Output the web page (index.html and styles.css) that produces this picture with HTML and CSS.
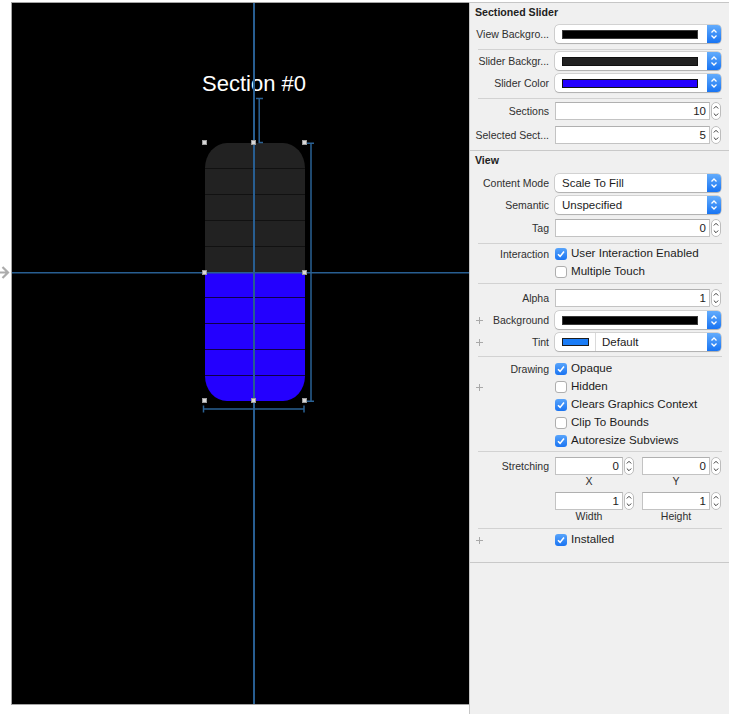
FILE: index.html
```html
<!DOCTYPE html>
<html>
<head>
<meta charset="utf-8">
<link rel="stylesheet" href="styles.css">
</head>
<body>
<div class="app">
  <div class="stage">
    <div class="screen"></div>
    <div class="caption">Section #0</div>
    <div class="slider">
      <div class="sec dark"></div><div class="sec dark"></div><div class="sec dark"></div><div class="sec dark"></div><div class="sec dark"></div>
      <div class="sec blue"></div><div class="sec blue"></div><div class="sec blue"></div><div class="sec blue"></div><div class="sec blue"></div>
    </div>
    <svg class="overlay" width="469" height="714" viewBox="0 0 469 714">
      <g fill="#285e91">
        <rect x="253" y="3" width="2" height="701"/>
        <rect x="12" y="272" width="457" height="1.5"/>
      </g>
      <g stroke="#2a6194" stroke-width="1.5" fill="none">
        <path d="M256 98.5 H263 M259.2 98 V142.5 H263"/>
        <path d="M305 143.2 H314 M311 143 V401 M305 401.2 H314"/>
        <path d="M203.5 409 H304 M203.5 405.5 V412.5 M304 405.5 V412.5"/>
      </g>
      <g fill="#d8d8d8" stroke="#9c9c9c" stroke-width="1">
        <rect x="202.5" y="140.5" width="4" height="4"/>
        <rect x="251.5" y="140.5" width="4" height="4"/>
        <rect x="302.5" y="140.5" width="4" height="4"/>
        <rect x="202.5" y="270.5" width="4" height="4"/>
        <rect x="302.5" y="270.5" width="4" height="4"/>
        <rect x="202.5" y="398.5" width="4" height="4"/>
        <rect x="251.5" y="398.5" width="4" height="4"/>
        <rect x="302.5" y="398.5" width="4" height="4"/>
      </g>
      <path d="M0 272.5 H7.5 M2.5 267 L8 272.5 L2.5 278" stroke="#acacac" stroke-width="2.2" fill="none"/>
    </svg>
  </div>

  <aside class="inspector">
    <div class="hdr">Sectioned Slider</div>

    <div class="row r-first">
      <div class="lbl"><span class="txt">View Backgro...</span></div>
      <div class="popup"><span class="swatch sw-black"></span><span class="pbtn"><svg width="14" height="18" viewBox="0 0 14 18"><path d="M4.5 7.5 L7 5 L9.5 7.5 M4.5 10.5 L7 13 L9.5 10.5" stroke="#fff" stroke-width="1.3" fill="none"/></svg></span></div>
    </div>
    <div class="sep s4"></div>
    <div class="row">
      <div class="lbl"><span class="txt">Slider Backgr...</span></div>
      <div class="popup"><span class="swatch sw-dark"></span><span class="pbtn"><svg width="14" height="18" viewBox="0 0 14 18"><path d="M4.5 7.5 L7 5 L9.5 7.5 M4.5 10.5 L7 13 L9.5 10.5" stroke="#fff" stroke-width="1.3" fill="none"/></svg></span></div>
    </div>
    <div class="row">
      <div class="lbl"><span class="txt">Slider Color</span></div>
      <div class="popup"><span class="swatch sw-blue"></span><span class="pbtn"><svg width="14" height="18" viewBox="0 0 14 18"><path d="M4.5 7.5 L7 5 L9.5 7.5 M4.5 10.5 L7 13 L9.5 10.5" stroke="#fff" stroke-width="1.3" fill="none"/></svg></span></div>
    </div>
    <div class="sep s4"></div>
    <div class="row tall m1">
      <div class="lbl"><span class="txt">Sections</span></div>
      <div class="fieldset"><span class="field">10</span><svg class="stepper" width="10" height="18" viewBox="0 0 10 18"><rect x="0.5" y="0.5" width="9" height="17" rx="4.5" fill="#fff" stroke="#bdbdbd"/><path d="M2.8 6.5 L5 4.3 L7.2 6.5 M2.8 11.5 L5 13.7 L7.2 11.5" stroke="#3a3a3a" stroke-width="1" fill="none"/></svg></div>
    </div>
    <div class="row tall">
      <div class="lbl"><span class="txt">Selected Sect...</span></div>
      <div class="fieldset"><span class="field">5</span><svg class="stepper" width="10" height="18" viewBox="0 0 10 18"><rect x="0.5" y="0.5" width="9" height="17" rx="4.5" fill="#fff" stroke="#bdbdbd"/><path d="M2.8 6.5 L5 4.3 L7.2 6.5 M2.8 11.5 L5 13.7 L7.2 11.5" stroke="#3a3a3a" stroke-width="1" fill="none"/></svg></div>
    </div>
    <div class="sep full s2"></div>

    <div class="hdr">View</div>
    <div class="row m3">
      <div class="lbl"><span class="txt">Content Mode</span></div>
      <div class="popup"><span class="val">Scale To Fill</span><span class="pbtn"><svg width="14" height="18" viewBox="0 0 14 18"><path d="M4.5 7.5 L7 5 L9.5 7.5 M4.5 10.5 L7 13 L9.5 10.5" stroke="#fff" stroke-width="1.3" fill="none"/></svg></span></div>
    </div>
    <div class="row">
      <div class="lbl"><span class="txt">Semantic</span></div>
      <div class="popup"><span class="val">Unspecified</span><span class="pbtn"><svg width="14" height="18" viewBox="0 0 14 18"><path d="M4.5 7.5 L7 5 L9.5 7.5 M4.5 10.5 L7 13 L9.5 10.5" stroke="#fff" stroke-width="1.3" fill="none"/></svg></span></div>
    </div>
    <div class="row m1">
      <div class="lbl"><span class="txt">Tag</span></div>
      <div class="fieldset"><span class="field">0</span><svg class="stepper" width="10" height="18" viewBox="0 0 10 18"><rect x="0.5" y="0.5" width="9" height="17" rx="4.5" fill="#fff" stroke="#bdbdbd"/><path d="M2.8 6.5 L5 4.3 L7.2 6.5 M2.8 11.5 L5 13.7 L7.2 11.5" stroke="#3a3a3a" stroke-width="1" fill="none"/></svg></div>
    </div>
    <div class="sep s4"></div>

    <div class="row check m1">
      <div class="lbl"><span class="txt">Interaction</span></div>
      <div class="cb"><span class="box on"><svg width="12" height="12" viewBox="0 0 12 12"><path d="M3 6.3 L5.1 8.4 L9 3.6" stroke="#fff" stroke-width="1.6" fill="none"/></svg></span><span class="t">User Interaction Enabled</span></div>
    </div>
    <div class="row check">
      <div class="lbl"></div>
      <div class="cb"><span class="box"></span><span class="t">Multiple Touch</span></div>
    </div>
    <div class="sep s2"></div>

    <div class="row m3">
      <div class="lbl"><span class="txt">Alpha</span></div>
      <div class="fieldset"><span class="field">1</span><svg class="stepper" width="10" height="18" viewBox="0 0 10 18"><rect x="0.5" y="0.5" width="9" height="17" rx="4.5" fill="#fff" stroke="#bdbdbd"/><path d="M2.8 6.5 L5 4.3 L7.2 6.5 M2.8 11.5 L5 13.7 L7.2 11.5" stroke="#3a3a3a" stroke-width="1" fill="none"/></svg></div>
    </div>
    <div class="row">
      <div class="lbl"><svg class="plus" width="7" height="7" viewBox="0 0 7 7"><path d="M3.5 0 V7 M0 3.5 H7" stroke="#a9a9a9" stroke-width="1"/></svg><span class="txt">Background</span></div>
      <div class="popup"><span class="swatch sw-black"></span><span class="pbtn"><svg width="14" height="18" viewBox="0 0 14 18"><path d="M4.5 7.5 L7 5 L9.5 7.5 M4.5 10.5 L7 13 L9.5 10.5" stroke="#fff" stroke-width="1.3" fill="none"/></svg></span></div>
    </div>
    <div class="row">
      <div class="lbl"><svg class="plus" width="7" height="7" viewBox="0 0 7 7"><path d="M3.5 0 V7 M0 3.5 H7" stroke="#a9a9a9" stroke-width="1"/></svg><span class="txt">Tint</span></div>
      <div class="popup"><span class="tint"></span><span class="divider"></span><span class="val v-tint">Default</span><span class="pbtn"><svg width="14" height="18" viewBox="0 0 14 18"><path d="M4.5 7.5 L7 5 L9.5 7.5 M4.5 10.5 L7 13 L9.5 10.5" stroke="#fff" stroke-width="1.3" fill="none"/></svg></span></div>
    </div>
    <div class="sep s3"></div>

    <div class="row check m3">
      <div class="lbl"><span class="txt">Drawing</span></div>
      <div class="cb"><span class="box on"><svg width="12" height="12" viewBox="0 0 12 12"><path d="M3 6.3 L5.1 8.4 L9 3.6" stroke="#fff" stroke-width="1.6" fill="none"/></svg></span><span class="t">Opaque</span></div>
    </div>
    <div class="row check">
      <div class="lbl"><svg class="plus" width="7" height="7" viewBox="0 0 7 7"><path d="M3.5 0 V7 M0 3.5 H7" stroke="#a9a9a9" stroke-width="1"/></svg></div>
      <div class="cb"><span class="box"></span><span class="t">Hidden</span></div>
    </div>
    <div class="row check">
      <div class="lbl"></div>
      <div class="cb"><span class="box on"><svg width="12" height="12" viewBox="0 0 12 12"><path d="M3 6.3 L5.1 8.4 L9 3.6" stroke="#fff" stroke-width="1.6" fill="none"/></svg></span><span class="t">Clears Graphics Context</span></div>
    </div>
    <div class="row check">
      <div class="lbl"></div>
      <div class="cb"><span class="box"></span><span class="t">Clip To Bounds</span></div>
    </div>
    <div class="row check">
      <div class="lbl"></div>
      <div class="cb"><span class="box on"><svg width="12" height="12" viewBox="0 0 12 12"><path d="M3 6.3 L5.1 8.4 L9 3.6" stroke="#fff" stroke-width="1.6" fill="none"/></svg></span><span class="t">Autoresize Subviews</span></div>
    </div>
    <div class="sep s1"></div>

    <div class="row pair m3">
      <div class="lbl"><span class="txt">Stretching</span></div>
      <div class="halves">
        <div class="fieldset"><span class="field">0</span><svg class="stepper" width="10" height="18" viewBox="0 0 10 18"><rect x="0.5" y="0.5" width="9" height="17" rx="4.5" fill="#fff" stroke="#bdbdbd"/><path d="M2.8 6.5 L5 4.3 L7.2 6.5 M2.8 11.5 L5 13.7 L7.2 11.5" stroke="#3a3a3a" stroke-width="1" fill="none"/></svg></div>
        <div class="fieldset"><span class="field">0</span><svg class="stepper" width="10" height="18" viewBox="0 0 10 18"><rect x="0.5" y="0.5" width="9" height="17" rx="4.5" fill="#fff" stroke="#bdbdbd"/><path d="M2.8 6.5 L5 4.3 L7.2 6.5 M2.8 11.5 L5 13.7 L7.2 11.5" stroke="#3a3a3a" stroke-width="1" fill="none"/></svg></div>
      </div>
    </div>
    <div class="row caps">
      <div class="lbl"></div>
      <div class="halves"><span class="capt">X</span><span class="capt">Y</span></div>
    </div>
    <div class="row pair m3">
      <div class="lbl"></div>
      <div class="halves">
        <div class="fieldset"><span class="field">1</span><svg class="stepper" width="10" height="18" viewBox="0 0 10 18"><rect x="0.5" y="0.5" width="9" height="17" rx="4.5" fill="#fff" stroke="#bdbdbd"/><path d="M2.8 6.5 L5 4.3 L7.2 6.5 M2.8 11.5 L5 13.7 L7.2 11.5" stroke="#3a3a3a" stroke-width="1" fill="none"/></svg></div>
        <div class="fieldset"><span class="field">1</span><svg class="stepper" width="10" height="18" viewBox="0 0 10 18"><rect x="0.5" y="0.5" width="9" height="17" rx="4.5" fill="#fff" stroke="#bdbdbd"/><path d="M2.8 6.5 L5 4.3 L7.2 6.5 M2.8 11.5 L5 13.7 L7.2 11.5" stroke="#3a3a3a" stroke-width="1" fill="none"/></svg></div>
      </div>
    </div>
    <div class="row caps">
      <div class="lbl"></div>
      <div class="halves"><span class="capt">Width</span><span class="capt">Height</span></div>
    </div>
    <div class="sep s6"></div>

    <div class="row check m2">
      <div class="lbl"><svg class="plus" width="7" height="7" viewBox="0 0 7 7"><path d="M3.5 0 V7 M0 3.5 H7" stroke="#a9a9a9" stroke-width="1"/></svg></div>
      <div class="cb"><span class="box on"><svg width="12" height="12" viewBox="0 0 12 12"><path d="M3 6.3 L5.1 8.4 L9 3.6" stroke="#fff" stroke-width="1.6" fill="none"/></svg></span><span class="t">Installed</span></div>
    </div>
    <div class="sep full s13"></div>
  </aside>
</div>
</body>
</html>
```

FILE: styles.css
```css
html, body {
  margin: 0;
  padding: 0;
  background: #ffffff;
}

.app {
  display: flex;
  width: 729px;
  height: 714px;
  overflow: hidden;
  font-family: "Liberation Sans", Arial, sans-serif;
}

/* ---------- canvas ---------- */
.stage {
  position: relative;
  width: 469px;
  height: 714px;
  flex: none;
  background: #ffffff;
}

.screen {
  margin: 2px 0 0 11px;
  width: 457px;
  height: 701px;
  background: #000;
  border-left: 1px solid #a4a4a4;
  border-top: 1px solid #a4a4a4;
  border-bottom: 1px solid #a4a4a4;
}

.caption {
  position: absolute;
  left: 202px;
  top: 71px;
  font-size: 22px;
  line-height: 26px;
  color: #fff;
  white-space: nowrap;
}

.slider {
  position: absolute;
  left: 205px;
  top: 143px;
  width: 100px;
  height: 258px;
  border-radius: 22px / 25px;
  overflow: hidden;
  display: flex;
  flex-direction: column;
}

.sec {
  flex: 1;
}
.sec.dark { background: #222222; }
.sec.blue { background: #2400fe; }
.sec.dark + .sec.dark { border-top: 1px solid #111111; }
.sec.blue + .sec.blue { border-top: 1px solid #10004a; }

.overlay {
  position: absolute;
  left: 0;
  top: 0;
}

/* ---------- inspector ---------- */
.inspector {
  width: 260px;
  height: 712px;
  margin-top: 2px;
  flex: none;
  box-sizing: border-box;
  background: #f0f0f0;
  border-left: 1px solid #c6c6c6;
  border-top: 1px solid #c6c6c6;
  color: #2e2e2e;
}

.hdr {
  height: 18px;
  line-height: 18px;
  padding-left: 5px;
  font-size: 10.6px;
  font-weight: bold;
  color: #222;
}

.row {
  display: grid;
  grid-template-columns: 79px 166px;
  column-gap: 6px;
  height: 22px;
  padding-top: 2px;
  box-sizing: border-box;
}
.row.tall { height: 24px; }
.row.r-first { margin-top: 2px; }
.row.m1 { margin-top: 1px; }
.row.m2 { margin-top: 2px; }
.row.m3 { margin-top: 3px; }
.row.check {
  height: 18px;
  padding-top: 0;
  align-items: center;
}
.row.pair { height: 20px; }
.row.caps {
  height: 12px;
  padding-top: 0;
}

.lbl {
  display: flex;
  align-items: center;
  height: 18px;
  font-size: 10.5px;
  color: #2f2f2f;
  white-space: nowrap;
}
.lbl .txt { margin-left: auto; }
.plus { margin-left: 6px; flex: none; }

.sep {
  height: 1px;
  background: #d2d2d2;
  margin: 0 7px 0 8px;
}
.sep.full { margin-left: 0; margin-right: 0; background: #c9c9c9; }
.sep.s1 { margin-top: 1px; }
.sep.s2 { margin-top: 2px; }
.sep.s3 { margin-top: 3px; }
.sep.s4 { margin-top: 4px; }
.sep.s6 { margin-top: 6px; }
.sep.s13 { margin-top: 13px; }

/* popup / color well */
.popup {
  display: flex;
  align-items: stretch;
  height: 18px;
  background: #fff;
  border-radius: 4px;
  overflow: hidden;
  box-shadow: 0 0 0 0.6px rgba(0, 0, 0, 0.22), 0 0.6px 1px rgba(0, 0, 0, 0.18);
}
.popup .val {
  flex: 1;
  padding-left: 7px;
  font-size: 11.5px;
  line-height: 18px;
  color: #1c1c1c;
  white-space: nowrap;
}
.popup .v-tint { padding-left: 6px; }
.pbtn {
  width: 14px;
  flex: none;
  background: linear-gradient(#63acfc, #1874f3);
  display: flex;
}
.swatch {
  flex: 1;
  margin: 5px 9px 4px 7px;
  border: 1px solid #3a3a3a;
  box-sizing: border-box;
}
.sw-black { background: #000; }
.sw-dark { background: #222; border-color: #111; }
.sw-blue { background: #2400fe; border-color: #111; }
.tint {
  width: 27px;
  flex: none;
  margin: 5px 0 5px 7px;
  box-sizing: border-box;
  background: #1a7cf6;
  border: 1px solid #1d1d1d;
}
.divider {
  width: 1px;
  flex: none;
  margin-left: 6px;
  background: #dadada;
}

/* text field + stepper */
.fieldset {
  display: flex;
  gap: 1px;
  height: 18px;
}
.field {
  flex: 1;
  min-width: 0;
  box-sizing: border-box;
  height: 18px;
  background: #fff;
  border: 1px solid #c3c3c3;
  border-top-color: #b0b0b0;
  text-align: right;
  padding-right: 3px;
  font-size: 11.5px;
  line-height: 16px;
  color: #1c1c1c;
}
.stepper { flex: none; }

.halves {
  display: grid;
  grid-template-columns: 79px 79px;
  column-gap: 8px;
}
.capt {
  width: 68px;
  text-align: center;
  font-size: 10.5px;
  line-height: 12px;
  color: #2f2f2f;
}

/* checkboxes */
.cb {
  display: flex;
  align-items: center;
  gap: 4px;
  font-size: 11.6px;
  color: #1c1c1c;
  white-space: nowrap;
}
.cb .t {
  line-height: 14px;
  padding-bottom: 2px;
}
.box {
  width: 12px;
  height: 12px;
  flex: none;
  box-sizing: border-box;
  border-radius: 3px;
  background: #fff;
  border: 1px solid #aeaeae;
}
.box.on {
  border: none;
  background: linear-gradient(#58a4fb, #1a74f2);
  display: flex;
}
```
